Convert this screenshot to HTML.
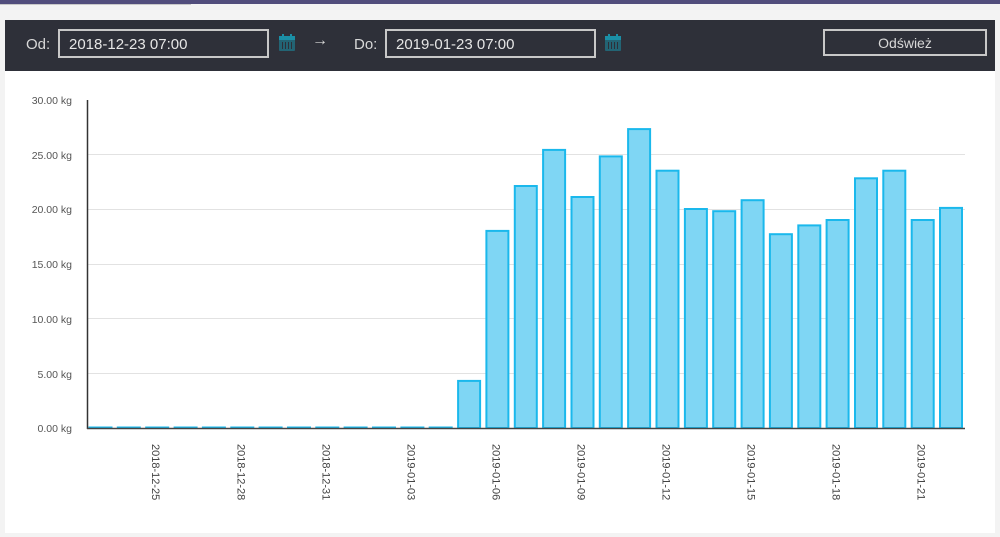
<!DOCTYPE html>
<html><head><meta charset="utf-8"><style>
*{margin:0;padding:0;box-sizing:border-box}
body{width:1000px;height:537px;background:#f3f3f3;font-family:"Liberation Sans",sans-serif;position:relative;overflow:hidden}
.topbar{position:absolute;left:0;top:0;width:1000px;height:4px;background:#514d7c}
.tab{position:absolute;left:0;top:4px;width:191px;height:1px;background:#c8c8c8}
.panel{position:absolute;left:5px;top:20px;width:990px;height:513px;background:#fff}
.hdr{position:absolute;left:5px;top:20px;width:990px;height:51px;background:#2e3039;color:#d8d8d8;font-size:15px}
.hdr span{position:absolute;top:16px}
.inp{position:absolute;top:9px;height:29px;border:2px solid #c8c8c8;color:#e6e6e6;font-size:15px;padding:5px 0 0 9px}
.btn{position:absolute;left:818px;top:9px;width:164px;height:27px;border:2px solid #c8c8c8;color:#d8d8d8;font-size:14px;text-align:center;padding-top:4px}
</style></head><body>
<div class="topbar"></div><div class="tab"></div>
<div class="panel"></div>
<div class="hdr">
<span style="left:21px">Od:</span>
<div class="inp" style="left:53px;width:211px">2018-12-23 07:00</div>
<svg style="position:absolute;left:272px;top:13px" width="20" height="20" viewBox="0 0 20 20"><rect x="2" y="3" width="16" height="15" rx="1" fill="#1b8fa6" opacity=".55"/><rect x="2" y="3" width="16" height="4" fill="#1b8fa6"/><rect x="5" y="1" width="2" height="4" fill="#1b8fa6"/><rect x="13" y="1" width="2" height="4" fill="#1b8fa6"/><g fill="#2e3039"><rect x="5" y="9" width="1" height="7"/><rect x="8" y="9" width="1" height="7"/><rect x="11" y="9" width="1" height="7"/><rect x="14" y="9" width="1" height="7"/></g></svg>
<span style="left:307px;top:12px;font-size:16px">→</span>
<span style="left:349px">Do:</span>
<div class="inp" style="left:380px;width:211px">2019-01-23 07:00</div>
<svg style="position:absolute;left:598px;top:13px" width="20" height="20" viewBox="0 0 20 20"><rect x="2" y="3" width="16" height="15" rx="1" fill="#1b8fa6" opacity=".55"/><rect x="2" y="3" width="16" height="4" fill="#1b8fa6"/><rect x="5" y="1" width="2" height="4" fill="#1b8fa6"/><rect x="13" y="1" width="2" height="4" fill="#1b8fa6"/><g fill="#2e3039"><rect x="5" y="9" width="1" height="7"/><rect x="8" y="9" width="1" height="7"/><rect x="11" y="9" width="1" height="7"/><rect x="14" y="9" width="1" height="7"/></g></svg>
<div class="btn">Odśwież</div>
</div>
<svg style="position:absolute;left:0;top:0" width="1000" height="537" font-family="Liberation Sans, sans-serif">
<g stroke="#e2e2e2" stroke-width="1">
<line x1="87" x2="965" y1="154.5" y2="154.5"/><line x1="87" x2="965" y1="209.5" y2="209.5"/><line x1="87" x2="965" y1="264.5" y2="264.5"/><line x1="87" x2="965" y1="318.5" y2="318.5"/><line x1="87" x2="965" y1="373.5" y2="373.5"/>
</g>
<g font-size="10.5" fill="#555" text-anchor="end">
<text x="72" y="104">30.00 kg</text><text x="72" y="159">25.00 kg</text><text x="72" y="213">20.00 kg</text><text x="72" y="268">15.00 kg</text><text x="72" y="323">10.00 kg</text><text x="72" y="378">5.00 kg</text><text x="72" y="432">0.00 kg</text>
</g>
<g id="bars" fill="#7fd6f4" stroke="#1ab8ec" stroke-width="2"></g>
<line x1="87.5" y1="100" x2="87.5" y2="429" stroke="#333" stroke-width="1.5"/>
<line x1="87" y1="428.5" x2="965" y2="428.5" stroke="#444" stroke-width="1.5"/>
<g id="lbl" font-size="11" fill="#444"></g>
</svg>
<script>
var v=[0,0,0,0,0,0,0,0,0,0,0,0,0,4.3,18,22.1,25.4,21.1,24.8,27.3,23.5,20,19.8,20.8,17.7,18.5,19,22.8,23.5,19,20.1];
var b=document.getElementById('bars'),s='';
v.forEach(function(k,i){var x=89.5+i*28.35,h=Math.max(k*10.95,0.5);s+='<rect x="'+x.toFixed(1)+'" y="'+(428-h).toFixed(1)+'" width="22" height="'+h.toFixed(1)+'"/>';});
b.innerHTML=s;
var L=['2018-12-25','2018-12-28','2018-12-31','2019-01-03','2019-01-06','2019-01-09','2019-01-12','2019-01-15','2019-01-18','2019-01-21'],t='';
L.forEach(function(d,j){var i=2+3*j,cx=89.5+i*28.35+11-5;t+='<text transform="translate('+cx.toFixed(1)+',444) rotate(90)">'+d+'</text>';});
document.getElementById('lbl').innerHTML=t;
</script>
</body></html>
